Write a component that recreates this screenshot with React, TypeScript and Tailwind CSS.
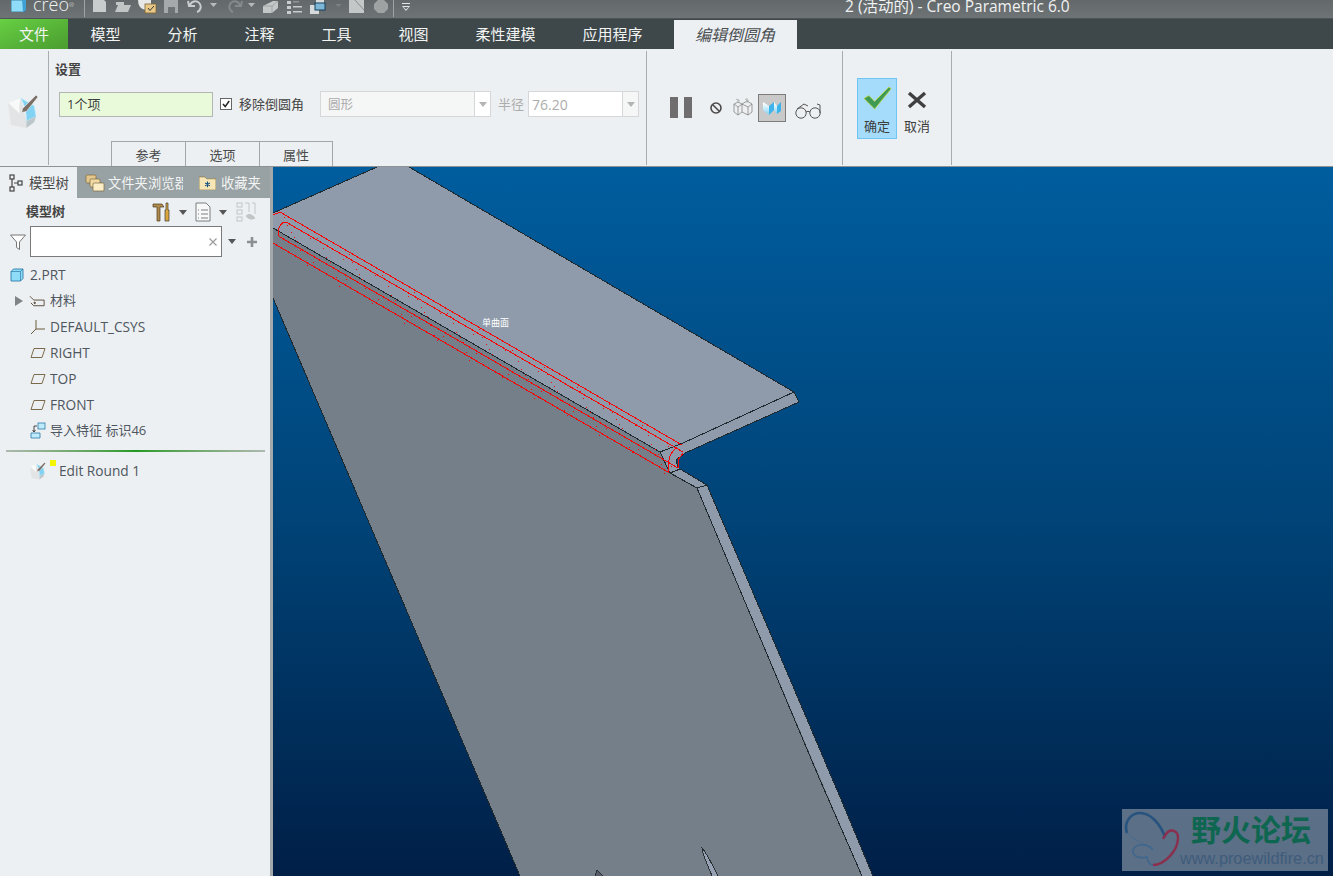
import React from "react";

const font = { fontFamily: '"Open Sans","Noto Sans CJK SC",sans-serif' };

const bands = [3, 6, 12, 16, 20, 24, 33, 37, 9, 28];
const dots: [number, number][] = Array.from({ length: 120 }, (_, i) => {
  const x = Math.round(284 + i * 3.25);
  const off = bands[i % 10] + ((i * 7) % 4);
  return [x, Math.round(214 + (x - 284) * 0.575 + off)] as [number, number];
});

function Viewport() {
  return (
    <svg viewBox="273 167 1060 709" className="block w-full h-full" shapeRendering="crispEdges">
      <defs>
        <linearGradient id="bg" x1="0" y1="0" x2="0" y2="1">
          <stop offset="0" stopColor="#005d9e" />
          <stop offset="0.5" stopColor="#004377" />
          <stop offset="1" stopColor="#001f47" />
        </linearGradient>
      </defs>
      <rect x="273" y="167" width="1060" height="709" fill="url(#bg)" />
      <polygon
        points="273,213 377,167 409,167 794,392 799,402 685,453 676,460 678,468 680,469 707,485 873,876 862,876 697,488 670,473 660,452 273,228"
        fill="#8f9bab"
      />
      <polygon points="273,228 660,452 670,473 697,488 862,876 520,876 273,298" fill="#757f89" />
      <path d="M595 876 L597 870 L603 876 Z" fill="#555c68" stroke="#2b3036" strokeWidth="1" />
      <path d="M702 848 C706 852 714 868 718 876 L712 876 C708 866 703 856 702 848 Z" fill="#96a2b4" stroke="#2b3036" strokeWidth="1" />
      <g fill="none" stroke="#1f2a30" strokeWidth="1">
        <path d="M409 167 L794 392 L799 402 L685 453 L676 460 L678 468" />
        <path d="M377 167 L273 213" />
        <path d="M794 392 L683 443 L660 452 L670 473 L680 469 L707 485 L833 780 L873 876" />
        <path d="M670 473 L697 488 L820 780 L862 876" />
        <path d="M697 488 L707 485" />
        <path d="M273 228 L660 452" />
        <path d="M273 298 L520 876" />
      </g>
      <g fill="none" stroke="#ff0000" strokeWidth="1">
        <path d="M273 215 L280 212 L682 445" />
        <path d="M683 452 L286 222 Q281 222 279 228 L278 235 L280 237 L678 468" />
        <path d="M273 243 L668 472" />
        <path d="M677 447 Q670 453 669 460 L668 473" />
        <path d="M683 453 L678 460 L678 468" />
      </g>
      {dots.map(([x, y], i) => (
        <rect key={i} x={x} y={y} width="1" height="1" fill="#ff0000" />
      ))}
      <text x="482" y="326" fontSize="9" fill="#ffffff" style={font}>
        单曲面
      </text>
    </svg>
  );
}

function Watermark() {
  return (
    <div className="absolute right-[5px] bottom-[5px] w-[206px] h-[62px] bg-[#5b6f86] flex items-start">
      <svg viewBox="0 0 60 62" className="w-[60px] h-[62px] shrink-0">
        <path d="M5 24 C1 12 10 4 18 4 C28 4 38 14 43 28" fill="none" stroke="#27537e" strokeWidth="2.6" />
        <path d="M5 24 C12 30 22 36 31 38" fill="none" stroke="#4a6d90" strokeWidth="1" />
        <path d="M31 56 C42 56 56 42 56 29 C56 21 48 19 44 25 L41 30" fill="none" stroke="#8a2f4d" strokeWidth="2.4" />
        <path d="M31 41 C24 33 13 35 11 41 C10 47 17 50 25 48 C25 52 28 56 31 56" fill="none" stroke="#3f668c" strokeWidth="1.6" />
      </svg>
      <div className="flex flex-col items-start">
        <span className="text-[30px] leading-[36px] font-bold text-[#0f6650] ml-[9px] mt-[1px] whitespace-nowrap" style={{ fontFamily: '"Noto Sans CJK SC",sans-serif' }}>
          野火论坛
        </span>
        <span className="text-[16.3px] leading-[20px] mt-[2px] text-[#3f5c7c] -ml-[2px] whitespace-nowrap" style={{ fontFamily: '"Liberation Sans",sans-serif' }}>
          www.proewildfire.cn
        </span>
      </div>
    </div>
  );
}

function RoundIcon({ className }: { className: string }) {
  return (
    <svg viewBox="0 0 32 36" className={className}>
      <path d="M0 9 L13 4 L19 28 L19 35 L3 32 Z" fill="#e2e4e5" />
      <path d="M0 9 L13 4 Q11 14 12 20 Z" fill="#f8f9f9" />
      <path d="M13 4 L27 12 L29 23 L19 28 Q19 14 13 4 Z" fill="#82d2f4" stroke="#c7edfb" strokeWidth="0.8" />
      <path d="M19 28 L29 23 L27 29 L19 35 Z" fill="#bcc7cc" />
      <path d="M15 15 L29 1 L31 3 L19 18 L14 19 Z" fill="#7a6f66" stroke="#fff" strokeWidth="0.6" />
    </svg>
  );
}

function Arrow({ className = "" }: { className?: string }) {
  return (
    <svg viewBox="0 0 8 5" className={"w-[8px] h-[5px] " + className}>
      <path d="M0 0 H8 L4 5 Z" fill="currentColor" />
    </svg>
  );
}

function QuickBar() {
  return (
    <div className="h-[19px] bg-gradient-to-b from-[#63686a] to-[#6e7476] border-b border-[#4f5456] flex items-start overflow-hidden relative">
      <svg viewBox="0 0 15 12" className="w-[15px] h-[12px] ml-[11px] shrink-0">
        <path d="M0 0 H15 V10 L13 12 H0 Z" fill="#8fdcf8" stroke="#2c6d93" strokeWidth="0.8" />
        <path d="M11 0 H15 V10 L12 12 Z" fill="#3fa1d3" />
      </svg>
      <span className="ml-[7px] -mt-[2px] w-[40px] shrink-0 text-[18px] leading-[12px] font-light text-[#f2f4f4] whitespace-nowrap" style={{ fontFamily: '"Open Sans",sans-serif' }}>
        creo<sup className="text-[6px] -top-[4px]">®</sup>
      </span>
      <div className="ml-[11px] w-px h-[17px] bg-[#9ea3a5] shrink-0" />
      <svg viewBox="85 0 330 18" className="w-[330px] h-[18px] shrink-0">
        <path d="M93 -1 H103 L106 2 V12 H93 Z" fill="#c9cccd" />
        <path d="M116 6 V2 H124 V5 H131 L128 12 H115 L118 5 H116 Z" fill="#c2c5c6" />
        <path d="M138 0 H151 V5 H146 V10 Q138 9 138 0 Z" fill="#e7e7e7" />
        <rect x="145" y="4" width="11" height="9" fill="#e8c987" stroke="#7d6434" strokeWidth="0.8" />
        <path d="M148 8 L150 10.5 L154 6" fill="none" stroke="#333" strokeWidth="1" />
        <path d="M164 0 H178 V13 H164 Z" fill="#a5a9ab" />
        <rect x="168" y="7" width="7" height="6" fill="#6e7476" />
        <path d="M190 5 A5.5 5.5 0 1 1 197 12 M188 1 L189 6 L195 6" fill="none" stroke="#c9cccd" strokeWidth="2" />
        <path d="M210 3 H217 L213.5 7 Z" fill="#b7babb" />
        <path d="M240 5 A5.5 5.5 0 1 0 233 12 M242 1 L241 6 L235 6" fill="none" stroke="#858a8c" strokeWidth="2" />
        <path d="M248 3 H255 L251.5 7 Z" fill="#b7babb" />
        <path d="M263 6 L273 1 H278 V8 L272 13 H263 Z" fill="#c4c7c8" />
        <path d="M272 6 V13 M263 6 H272 L278 1" stroke="#888d8f" strokeWidth="0.6" fill="none" />
        <g fill="#c9cccd">
          <rect x="287" y="1" width="4" height="3" />
          <rect x="287" y="6" width="4" height="3" />
          <rect x="287" y="11" width="4" height="3" />
          <rect x="293" y="6" width="9" height="1.5" />
          <rect x="293" y="11" width="9" height="1.5" />
          <rect x="293" y="1" width="6" height="1.5" fill="#8f9496" />
        </g>
        <rect x="310" y="5" width="9" height="9" fill="#d7dadb" />
        <rect x="316" y="-1" width="8" height="4" fill="#d7dadb" />
        <rect x="315" y="3" width="10" height="7" fill="#7eb6d6" stroke="#123f5f" strokeWidth="1" />
        <path d="M335 4 H342 L338.5 7 Z" fill="#7c8183" />
        <path d="M349 -1 H364 V13 H349 Z" fill="#c4c7c8" />
        <path d="M354 -1 L364 10" stroke="#70757a" strokeWidth="0.7" />
        <path d="M374 4 L378 0 H384 L388 4 V9 L384 13 H378 L374 9 Z" fill="#9ea2a3" />
        <rect x="393" y="0" width="1" height="17" fill="#9ea3a5" />
        <rect x="402" y="3" width="8" height="1" fill="#e4e6e6" />
        <path d="M402 6 H410 L406 11 Z M403.5 7 H408.5 L406 9.5 Z" fill="#e4e6e6" fillRule="evenodd" />
      </svg>
      <div className="absolute left-[845px] -top-[4px] text-[15.5px] leading-[20px] text-[#f0f2f2] whitespace-nowrap" style={font}>
        2 (活动的) - Creo Parametric 6.0
      </div>
    </div>
  );
}

function TabsBar() {
  const tabs = ["模型", "分析", "注释", "工具", "视图", "柔性建模", "应用程序"];
  return (
    <div className="h-[30px] bg-[#3e4749] flex items-stretch text-[15px] text-[#f2f4f4]" style={font}>
      <div className="w-[68px] bg-gradient-to-br from-[#67d043] to-[#4a9c2f] flex items-center justify-center">文件</div>
      <div className="flex items-center -ml-px">
        {tabs.map((t) => (
          <div key={t} className="px-[23.5px] whitespace-nowrap">{t}</div>
        ))}
      </div>
      <div className="ml-[7.5px] mt-px w-[123px] bg-[#edf0f2] text-[16px] text-[#4a4f52] italic flex items-center justify-center">编辑倒圆角</div>
    </div>
  );
}

function Sep() {
  return <div className="w-px self-stretch mt-[2px] mb-[1px] bg-[#a9adaf] shrink-0" />;
}

function RibbonTab({ label }: { label: string }) {
  return (
    <div className="w-[74px] h-[25px] pt-[3px] border-l border-t border-[#a3a5a6] last:border-r flex items-center justify-center text-[13px] text-[#4a4a4a]">
      {label}
    </div>
  );
}

function ToolIcons() {
  return (
    <div className="flex items-center w-[195px] shrink-0 h-[117px] pl-[23px]">
      <div className="flex gap-[6px] w-[22px] shrink-0">
        <div className="w-[8px] h-[21px] bg-[#706d6f] shrink-0" />
        <div className="w-[8px] h-[21px] bg-[#706d6f] shrink-0" />
      </div>
      <svg viewBox="0 0 14 14" className="w-[14px] h-[14px] ml-[17px]">
        <circle cx="7" cy="7" r="5" fill="none" stroke="#4a4a4a" strokeWidth="1.6" />
        <path d="M3.5 3.5 L10.5 10.5" stroke="#4a4a4a" strokeWidth="1.6" />
      </svg>
      <svg viewBox="0 0 20 19" className="w-[20px] h-[19px] ml-[10px]" fill="none" stroke="#777" strokeWidth="0.7">
        <path d="M1 6 L5 4 L9 6 L9 14 L5 17 L1 14 Z M1 6 L5 9 L9 6 M5 9 V17" />
        <path d="M9 6 L14 3 L19 6 L19 14 L15 17 L9 14 M9 6 L15 9 L19 6 M15 9 V17" />
        <path d="M5 1 V5 M14 0 V5 M3 1 L7 3 M12 1 L16 3" stroke="#a0a0a0" />
      </svg>
      <div className="w-[28px] h-[28px] ml-[5px] bg-[#c9c9c9] border border-[#7d7d7d] flex items-center justify-center pt-[2px]">
        <svg viewBox="0 0 18 15" className="w-[18px] h-[15px]">
          <defs>
            <linearGradient id="fold" x1="0" y1="0" x2="0" y2="1">
              <stop offset="0.1" stopColor="#ffffff" />
              <stop offset="1" stopColor="#7fd2f5" />
            </linearGradient>
          </defs>
          <path d="M0 1 L6 5 V14 L0 9 Z" fill="url(#fold)" />
          <path d="M6 5 L11 1 V9 L6 14 Z" fill="#3fb4ea" />
          <path d="M11 1 L14 5 V13 L11 9 Z" fill="url(#fold)" />
          <path d="M14 5 L18 1 V10 L14 13 Z" fill="#3fb4ea" />
        </svg>
      </div>
      <svg viewBox="0 0 28 16" className="w-[28px] h-[16px] ml-[8px] mt-[6px]" fill="none" stroke="#555" strokeWidth="1">
        <circle cx="7" cy="10" r="5.2" />
        <circle cx="21" cy="10" r="5.2" />
        <path d="M12 9 Q14 7.5 16 9 M3 6 L10 1 L14 3 M26 10 V2 L23 1" />
      </svg>
    </div>
  );
}

function Ribbon() {
  return (
    <div className="h-[118px] bg-[#edf0f2] border-b border-[#8e9294] flex" style={font}>
      <div className="w-[48px] shrink-0 flex items-center pl-[8px] pt-[7px]">
        <RoundIcon className="w-[31px] h-[35px]" />
      </div>
      <Sep />
      <div className="w-[597px] shrink-0 flex flex-col pl-[6px]">
        <div className="text-[13px] leading-[16px] font-bold text-[#444] mt-[12px]">设置</div>
        <div className="flex items-center mt-[14px] ml-[4px] h-[26px]">
          <div className="w-[154px] h-[25px] bg-[#e9fadb] border border-[#b4b6b4] flex items-center pl-[7px] pt-[2px] text-[13px] text-[#3c3c3c]">1个项</div>
          <div className="ml-[7px] w-[12px] h-[12px] border border-[#666] bg-white flex items-center justify-center">
            <svg viewBox="0 0 10 10" className="w-[10px] h-[10px]"><path d="M2 5 L4.2 7.6 L8.2 2" fill="none" stroke="#222" strokeWidth="1.5" /></svg>
          </div>
          <span className="ml-[7px] mt-[2px] text-[13px] text-[#444] whitespace-nowrap">移除倒圆角</span>
          <div className="ml-[16px] w-[171px] h-[26px] bg-[#f5f6f6] border border-[#d5d7d8] flex items-center text-[12.5px] text-[#acacac]">
            <span className="pl-[7px] pt-[2px] flex-1">圆形</span>
            <div className="w-[16px] h-full bg-white border-l border-[#d5d7d8] flex items-center justify-center text-[#b4b4b4]"><Arrow /></div>
          </div>
          <span className="ml-[7px] mt-[2px] text-[13px] text-[#acacac] whitespace-nowrap">半径</span>
          <div className="ml-[4px] w-[111px] h-[26px] bg-white border border-[#d5d7d8] flex items-center text-[14px] text-[#acacac]">
            <span className="pl-[3px] flex-1">76.20</span>
            <div className="w-[16px] h-full bg-[#f5f6f6] border-l border-[#d5d7d8] flex items-center justify-center text-[#b4b4b4]"><Arrow /></div>
          </div>
        </div>
        <div className="flex mt-auto ml-[56px]">
          <RibbonTab label="参考" />
          <RibbonTab label="选项" />
          <RibbonTab label="属性" />
        </div>
      </div>
      <Sep />
      <ToolIcons />
      <Sep />
      <div className="w-[108px] shrink-0 flex items-start pl-[14px] pt-[29px]">
        <div className="w-[40px] h-[61px] bg-[#a5dcfb] border border-[#6fc6f5] flex flex-col items-center text-[13px] text-[#3c3c3c]">
          <svg viewBox="0 0 30 26" className="w-[29px] h-[25px] mt-[7px] shrink-0">
            <path d="M1 13 L6 10 L12 16 L27 1 L29 3 L12 24 Z" fill="#3f9a55" stroke="#c3d838" strokeWidth="0.8" />
          </svg>
          <span className="mt-[6px] leading-[18px] whitespace-nowrap">确定</span>
        </div>
        <div className="w-[40px] flex flex-col items-center text-[13px] text-[#3c3c3c]">
          <svg viewBox="0 0 20 20" className="w-[20px] h-[20px] mt-[13px] shrink-0">
            <path d="M2 2 L18 16 M18 2 L2 16" stroke="#3f3f3f" strokeWidth="3.4" />
          </svg>
          <span className="mt-[6px] leading-[18px] whitespace-nowrap">取消</span>
        </div>
      </div>
      <Sep />
    </div>
  );
}

function Plane() {
  return (
    <svg viewBox="0 0 16 12" className="w-[16px] h-[12px]">
      <path d="M4 1.5 H15 L12 10.5 H1 Z" fill="none" stroke="#7c6a4c" strokeWidth="1" />
    </svg>
  );
}

function Row({ icon, label, arrow, zh }: { icon: React.ReactNode; label: string; arrow?: boolean; zh?: boolean }) {
  return (
    <div className={zh ? "h-[26px] flex items-center text-[13px] text-[#4e5660]" : "h-[26px] flex items-center text-[13.7px] text-[#4e5660]"}>
      <div className="w-[29px] shrink-0 flex justify-center">
        {arrow && (
          <svg viewBox="0 0 8 10" className="w-[8px] h-[10px] ml-[9px]"><path d="M0 0 L8 5 L0 10 Z" fill="#7f8487" /></svg>
        )}
      </div>
      <div className="w-[17px] shrink-0 flex justify-center">{icon}</div>
      <span className="ml-[4px] whitespace-nowrap">{label}</span>
    </div>
  );
}

function Sidebar() {
  return (
    <aside className="w-[273px] shrink-0 bg-[#edf0f2] border-r-[3px] border-[#a3a8aa] flex flex-col overflow-hidden" style={font}>
      <div className="h-[31px] flex shrink-0 text-[13.3px]">
        <div className="w-[77px] shrink-0 flex items-center pl-[9px] text-[#4a4a4a]">
          <svg viewBox="0 0 14 18" className="w-[14px] h-[18px] shrink-0" fill="none" stroke="#444" strokeWidth="1.2">
            <rect x="1" y="1" width="4" height="4" />
            <rect x="9" y="7" width="4" height="4" />
            <rect x="1" y="13" width="4" height="4" />
            <path d="M3 5 V13 M5 9 H9" />
          </svg>
          <span className="ml-[6px] pt-[2px] whitespace-nowrap">模型树</span>
        </div>
        <div className="flex-1 bg-[#98a1a3] flex items-center text-[#f3f4f4] overflow-hidden">
          <svg viewBox="0 0 20 18" className="w-[20px] h-[18px] ml-[8px] shrink-0">
            <rect x="1" y="1" width="10" height="8" rx="1" fill="#e2c68b" stroke="#7b6840" strokeWidth="0.7" />
            <rect x="5" y="5" width="10" height="8" rx="1" fill="#f0d9a4" stroke="#7b6840" strokeWidth="0.7" />
            <rect x="8" y="9" width="11" height="8" rx="1" fill="#fbeec6" stroke="#7b6840" strokeWidth="0.7" />
          </svg>
          <span className="ml-[3px] pt-[2px] w-[75px] whitespace-nowrap overflow-hidden shrink-0">文件夹浏览器</span>
          <svg viewBox="0 0 18 16" className="w-[17px] h-[15px] ml-[16px] shrink-0">
            <path d="M0 2 H6 L8 4 H18 V16 H0 Z" fill="#f6e5b5" stroke="#8a7748" strokeWidth="0.7" />
            <path d="M9 7 V13 M6.5 8.5 L11.5 11.5 M11.5 8.5 L6.5 11.5" stroke="#0f4f80" strokeWidth="1.1" />
          </svg>
          <span className="ml-[5px] pt-[2px] whitespace-nowrap">收藏夹</span>
        </div>
      </div>
      <div className="h-[28px] flex items-center shrink-0 pl-[26px]">
        <span className="text-[13px] font-bold text-[#444] w-[126px] shrink-0">模型树</span>
        <svg viewBox="0 0 18 20" className="w-[18px] h-[20px] shrink-0">
          <path d="M1 2 H10 L12 5 H8 V19 H5 V5 H1 Z" fill="#b08b4d" stroke="#4a3b20" strokeWidth="0.7" />
          <path d="M14 1 H16 V8 H17 V19 H13 V8 H14 Z" fill="#d9a53c" stroke="#3b3b3b" strokeWidth="0.7" />
        </svg>
        <Arrow className="ml-[9px] text-[#555] shrink-0" />
        <svg viewBox="0 0 16 20" className="w-[16px] h-[20px] ml-[8px] shrink-0" fill="none" stroke="#6b7075" strokeWidth="0.9">
          <path d="M1 1 H11 L15 5 V19 H1 Z" fill="#f7f8f8" />
          <path d="M6 8 H13 M6 12 H13 M6 16 H13 M3 8 H4 M3 12 H4 M3 16 H4" />
        </svg>
        <Arrow className="ml-[8px] text-[#555] shrink-0" />
        <svg viewBox="0 0 20 20" className="w-[20px] h-[20px] ml-[9px] shrink-0" fill="none" stroke="#c2c5c6" strokeWidth="1">
          <rect x="1" y="1" width="5" height="4" />
          <rect x="1" y="8" width="5" height="4" />
          <rect x="1" y="15" width="5" height="4" />
          <path d="M9 1 H13 M16 1 H19 V12 M13 1 V10" />
          <path d="M10 14 Q14 10 19 16 Q14 19 10 14 Z" fill="#c2c5c6" />
        </svg>
      </div>
      <div className="h-[31px] flex items-center shrink-0 pl-[10px]">
        <svg viewBox="0 0 16 16" className="w-[16px] h-[16px] shrink-0"><path d="M0.5 1 H15.5 L9.5 8 V15.5 L6.5 13.5 V8 Z" fill="#fff" stroke="#777" /></svg>
        <div className="ml-[4px] w-[192px] h-[31px] bg-white border border-[#7a7a7a] flex items-center justify-end pr-[4px] shrink-0">
          <svg viewBox="0 0 8 8" className="w-[8px] h-[8px]"><path d="M0.5 0.5 L7.5 7.5 M7.5 0.5 L0.5 7.5" stroke="#999" strokeWidth="1.1" /></svg>
        </div>
        <Arrow className="ml-[6px] text-[#555] shrink-0" />
        <svg viewBox="0 0 12 12" className="w-[12px] h-[12px] ml-[10px] shrink-0"><path d="M6 1 V11 M1 6 H11" stroke="#8b8f92" strokeWidth="2.6" /></svg>
      </div>
      <div className="mt-[5px] shrink-0">
        <div className="h-[26px] flex items-center text-[13.7px] text-[#4e5660] pl-[10px]">
          <svg viewBox="0 0 14 14" className="w-[14px] h-[14px] shrink-0">
            <path d="M1 3.5 L3.5 1 H13 V10.5 L10.5 13 H1 Z" fill="#8fdcf8" stroke="#2c7aa8" strokeWidth="0.9" />
            <path d="M10.5 3.5 V13 M10.5 3.5 H1 M10.5 3.5 L13 1" stroke="#2c7aa8" fill="none" strokeWidth="0.7" />
          </svg>
          <span className="ml-[6px]">2.PRT</span>
        </div>
        <Row
          arrow
          zh
          label="材料"
          icon={
            <svg viewBox="0 0 18 12" className="w-[17px] h-[12px]" fill="none" stroke="#5a4a3c" strokeWidth="1">
              <path d="M1 1 L5 5 H16 V11 H5 L2 8" />
              <circle cx="6" cy="8" r="0.8" fill="#5a4a3c" />
            </svg>
          }
        />
        <Row
          label="DEFAULT_CSYS"
          icon={
            <svg viewBox="0 0 16 16" className="w-[16px] h-[16px]" fill="none" stroke="#6a5a3f" strokeWidth="1">
              <path d="M6 1 V10 H15 M6 10 L1 15" />
            </svg>
          }
        />
        <Row label="RIGHT" icon={<Plane />} />
        <Row label="TOP" icon={<Plane />} />
        <Row label="FRONT" icon={<Plane />} />
        <Row
          zh
          label="导入特征 标识46"
          icon={
            <svg viewBox="0 0 16 18" className="w-[16px] h-[18px]">
              <rect x="8" y="1" width="7" height="6" fill="#bfeafb" stroke="#2c7aa8" strokeWidth="0.8" />
              <path d="M1 11 H10 V16 H1 Z" fill="#bfeafb" stroke="#2c7aa8" strokeWidth="0.8" />
              <path d="M4 4 H7 M4 4 V10 M2.5 8 L4 10 L5.5 8" fill="none" stroke="#333" strokeWidth="0.9" />
            </svg>
          }
        />
      </div>
      <div className="mt-[6px] mx-[6px] w-[259px] h-[2px] bg-gradient-to-r from-[#aeb8ae] via-[#1f9a1f] to-[#aeb8ae] shrink-0" />
      <div className="h-[26px] mt-[6px] flex items-center text-[13.7px] text-[#4e5660] pl-[30px] shrink-0">
        <RoundIcon className="w-[16px] h-[18px] shrink-0" />
        <span className="w-[6px] h-[6px] bg-[#f5f500] self-start mt-[2px] ml-[4px] shrink-0" />
        <span className="ml-[3px] whitespace-nowrap">Edit Round 1</span>
      </div>
    </aside>
  );
}

export default function App() {
  return (
    <div className="w-[1333px] h-[876px] overflow-hidden flex flex-col bg-[#edf0f2]">
      <QuickBar />
      <TabsBar />
      <Ribbon />
      <div className="flex-1 flex min-h-0">
        <Sidebar />
        <div className="flex-1 relative min-w-0">
          <Viewport />
          <Watermark />
        </div>
      </div>
    </div>
  );
}
